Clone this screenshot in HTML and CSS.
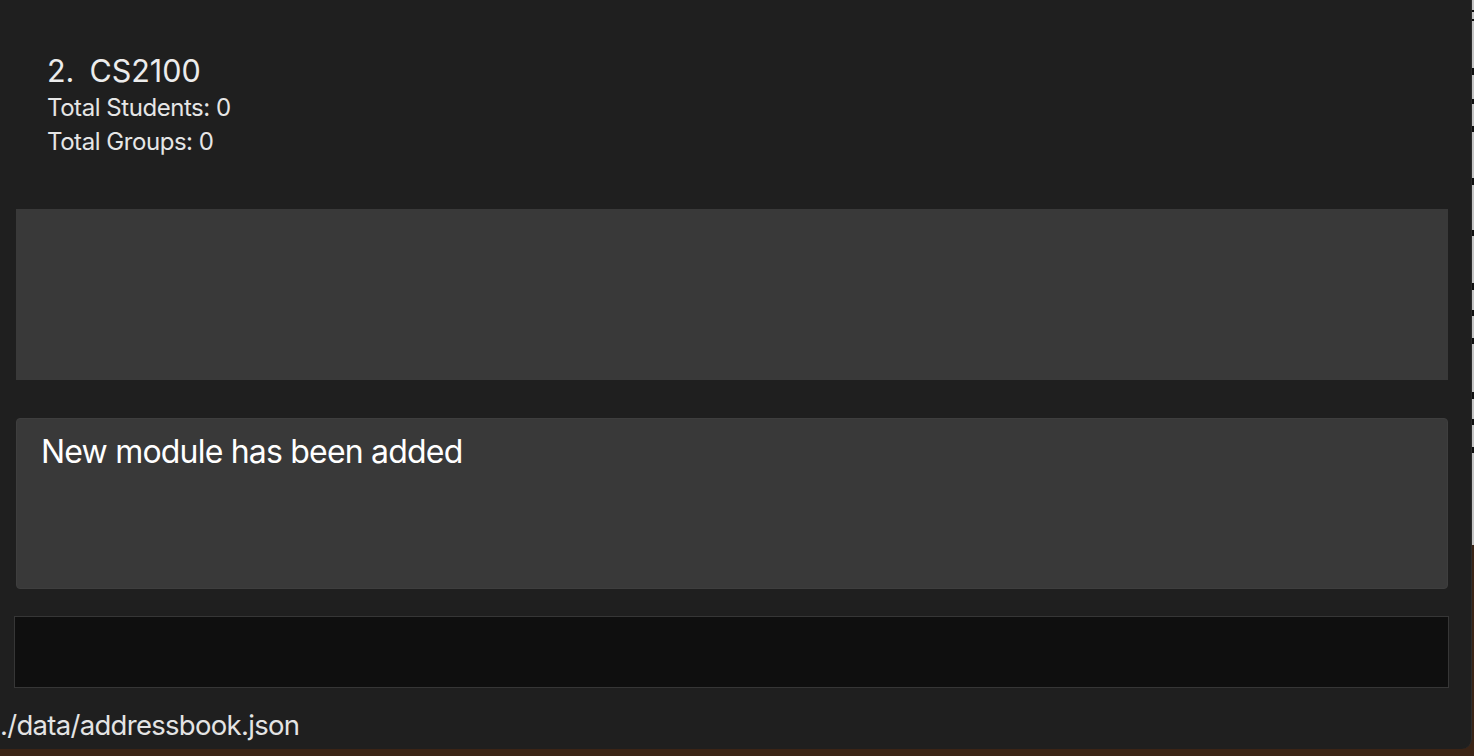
FILE: index.html
```html
<!DOCTYPE html>
<html>
<head>
<meta charset="utf-8">
<link rel="stylesheet" href="styles.css">
</head>
<body>
<div class="screen">
  <div class="top">
    <div class="window">
      <div class="module">
        <div class="title"><span class="idx">2.</span><span class="code">CS2100</span></div>
        <div class="detail">Total Students: 0</div>
        <div class="detail">Total Groups: 0</div>
      </div>
      <div class="panel"></div>
      <div class="result">New module has been added</div>
      <div class="command"></div>
      <div class="status">./data/addressbook.json</div>
    </div>
    <div class="side">
      <i class="m m1"></i><i class="m m2"></i><i class="m m3"></i><i class="m m4"></i><i class="m m5"></i><i class="m m6"></i><i class="m m7"></i><i class="m m8"></i><i class="m m9"></i><i class="m m10"></i><i class="m m11"></i><i class="m m12"></i><i class="m m13"></i>
    </div>
  </div>
  <div class="desk"></div>
</div>
</body>
</html>
```

FILE: styles.css
```css
* { box-sizing: border-box; }
html, body {
  margin: 0;
  padding: 0;
  width: 1474px;
  height: 756px;
  overflow: hidden;
  background: #3a2416;
  font-family: Inter, "Noto Sans", "Liberation Sans", sans-serif;
}
.screen {
  display: flex;
  flex-direction: column;
  width: 1474px;
  height: 756px;
}
.top {
  display: flex;
  height: 749px;
}
.window {
  width: 1472px;
  height: 749px;
  background: #1f1f1f;
  border-right: 1px solid #2c2c2c;
  border-bottom-right-radius: 10px;
  display: flex;
  flex-direction: column;
  color: #ececec;
}
.side {
  flex: 1;
  background: #c4c4c4;
  display: flex;
  flex-direction: column;
  border-bottom: 204px solid #3a2416;
}
.m {
  display: block;
  width: 2px;
  background: #111;
}
.m1 { margin-top: 10px; height: 2px; }
.m2 { margin-top: 7px; height: 2px; }
.m3 { margin-top: 47px; height: 7px; }
.m4 { margin-top: 24px; height: 5px; }
.m5 { margin-top: 22px; height: 6px; }
.m6 { margin-top: 46px; height: 7px; }
.m7 { margin-top: 45px; height: 6px; }
.m8 { margin-top: 47px; height: 7px; }
.m9 { margin-top: 20px; height: 6px; }
.m10 { margin-top: 22px; height: 6px; }
.m11 { margin-top: 48px; height: 7px; }
.m12 { margin-top: 20px; height: 6px; }
.m13 { margin-top: 22px; height: 6px; }

.module {
  height: 209px;
  padding: 53px 0 0 47px;
  display: flex;
  flex-direction: column;
}
.title {
  display: flex;
  gap: 15px;
  font-size: 30.5px;
  line-height: 36px;
  color: #ececec;
}
.detail {
  font-size: 24px;
  line-height: 34px;
  letter-spacing: -0.45px;
  color: #e6e6e6;
}
.title + .detail { margin-top: 2px; }
.panel {
  height: 171px;
  margin: 0 23px 0 16px;
  background: #393939;
}
.result {
  height: 171px;
  margin: 38px 23px 0 16px;
  background: #393939;
  border: 1px solid #3e3e3e;
  border-radius: 4px;
  padding: 13px 24px;
  font-size: 32px;
  line-height: 40px;
  letter-spacing: -0.8px;
  color: #ffffff;
}
.command {
  height: 72px;
  margin: 27px 22px 0 14px;
  background: #0f0f0f;
  border: 1px solid #363636;
}
.status {
  flex: 1;
  display: flex;
  align-items: center;
  padding: 12px 0 0 0;
  font-size: 27.5px;
  letter-spacing: -0.7px;
  color: #e4e4e4;
}
.desk {
  flex: 1;
  background: #3b2416;
}
```
